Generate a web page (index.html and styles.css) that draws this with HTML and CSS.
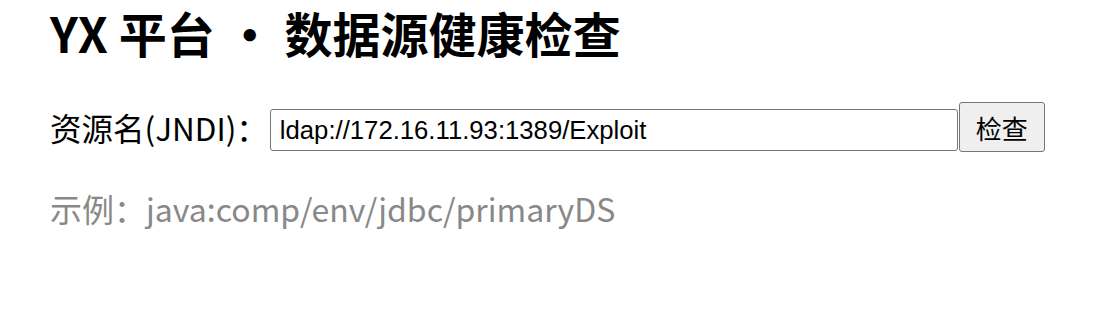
FILE: index.html
```html
<!DOCTYPE html>
<html lang="zh-CN">
<head>
<meta charset="utf-8">
<title>YX 平台 · 数据源健康检查</title>
<link rel="stylesheet" href="styles.css">
</head>
<body>
<main class="page">
  <h1 class="title">YX 平台 ・ 数据源健康检查</h1>
  <form class="check-form">
    <label class="label" for="jndi">资源名(JNDI)：</label>
    <input class="field" id="jndi" type="text" value="ldap://172.16.11.93:1389/Exploit">
    <button class="btn" type="button">检查</button>
  </form>
  <p class="hint">示例：java:comp/env/jdbc/primaryDS</p>
</main>
</body>
</html>
```
FILE: styles.css
```css
html, body {
  margin: 0;
  padding: 0;
  background: #ffffff;
}
.page {
  padding: 0 0 0 50px;
  font-family: "Noto Sans CJK SC", "Noto Sans", sans-serif;
  color: #000;
}
.title {
  margin: -3px 0 0 0;
  font-size: 48px;
  font-weight: 700;
  line-height: 70px;
}
.check-form {
  display: flex;
  align-items: flex-end;
  margin-top: 35px;
}
.label {
  align-self: center;
  font-size: 31.5px;
  line-height: 44px;
  margin-right: 2px;
}
.field {
  box-sizing: border-box;
  width: 688px;
  height: 42px;
  margin: 0 0 1px 0;
  padding: 0 9px;
  font-family: "Liberation Sans", Arial, sans-serif;
  font-size: 25.7px;
  color: #000;
  border: 1.5px solid #767676;
  border-radius: 3px;
  background: #fff;
}
.btn {
  box-sizing: border-box;
  width: 86px;
  height: 50px;
  margin: 0 0 0 1px;
  padding: 0;
  font-family: "Noto Sans CJK SC", sans-serif;
  font-size: 26px;
  color: #000;
  background: #efefef;
  border: 1.5px solid #767676;
  border-radius: 3px;
}
.hint {
  margin: 34px 0 0 0;
  font-size: 32px;
  line-height: 44px;
  color: #888888;
}
```
